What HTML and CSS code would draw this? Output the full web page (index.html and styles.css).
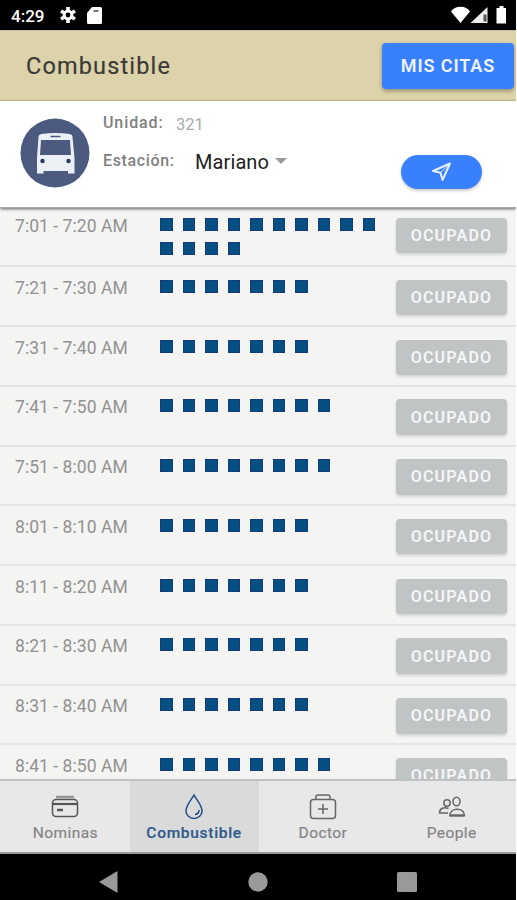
FILE: index.html
```html
<!DOCTYPE html>
<html lang="es">
<head>
<meta charset="utf-8">
<title>Combustible</title>
<link rel="stylesheet" href="styles.css">
</head>
<body>
<div class="phone">
  <div class="status">
    <span class="clock">4:29</span>
    <svg class="gear" width="16" height="16" viewBox="0 0 16 16"><g stroke="#fff" stroke-width="3.6"><path d="M8 0v16M1 4l14 8M1 12l14-8"/></g><circle cx="8" cy="8" r="5.4" fill="#fff"/><circle cx="8" cy="8" r="2.4" fill="#000"/></svg>
    <svg class="sd" width="15" height="17" viewBox="0 0 15 17"><path d="M5 0h8.500q1.500 0 1.500 1.500v14q0 1.500-1.500 1.500h-12q-1.500 0-1.500-1.500V6z" fill="#fff"/><path d="M6.500 4h5" stroke="#777" stroke-width="2"/></svg>
    <span class="fill"></span>
    <svg width="56" height="18" viewBox="0 0 56 18"><path d="M0 5.500Q3 .8 9.500.8T19 5.500L9.500 17z" fill="#fff"/><path d="M19.500 17L36.500 1v16z" fill="#eee"/><path d="M32.500 8.500h3v7h-3z" fill="#555"/><path d="M48.500 0h4v2h2.500v15.500h-9.500V2h3z" fill="#fff"/></svg>
  </div>
  <header class="bar">
    <h1>Combustible</h1>
    <button class="citas">MIS CITAS</button>
  </header>
  <section class="unit">
    <svg class="bus" width="70" height="70" viewBox="0 0 70 70"><circle cx="35" cy="35" r="34.500" fill="#4c5a80"/><path d="M18.500 19q0-2.500 3-3 14-2 28 0 3 .5 3 3L54.500 40v15.500h-6.500V53H23.500v2.500H17V40z" fill="#edf1f6"/><path d="M21 22h29l1 15H20z" fill="#4c5a80"/><path d="M30.500 18.500h10" stroke="#4c5a80" stroke-width="1.500"/><circle cx="22.500" cy="43" r="2.200" fill="#263765"/><circle cx="48.500" cy="43" r="2.200" fill="#263765"/></svg>
    <div class="fields">
      <div class="field"><span class="label unidad">Unidad:</span><span class="num">321</span></div>
      <div class="field station"><span class="label">Estación:</span><span class="select">Mariano</span><svg width="12" height="6" viewBox="0 0 12 6"><path d="M0 0h12L6 6z" fill="#999"/></svg></div>
    </div>
    <button class="send"><svg width="21" height="20" viewBox="0 0 21 20"><path d="M19 1.500L2 9l7.500 1.700L11.500 18z" fill="none" stroke="#e6efff" stroke-width="2" stroke-linejoin="round"/><path d="M19 1.500l-9.500 9.200" stroke="#e6efff" stroke-width="1"/></svg></button>
  </section>
  <main class="list">
    <div class="row first"><span class="time">7:01 - 7:20 AM</span><div class="slots"><i></i><i></i><i></i><i></i><i></i><i></i><i></i><i></i><i></i><i></i><i></i><i></i><i></i><i></i></div><button class="busy">OCUPADO</button></div>
    <div class="row"><span class="time">7:21 - 7:30 AM</span><div class="slots"><i></i><i></i><i></i><i></i><i></i><i></i><i></i></div><button class="busy">OCUPADO</button></div>
    <div class="row"><span class="time">7:31 - 7:40 AM</span><div class="slots"><i></i><i></i><i></i><i></i><i></i><i></i><i></i></div><button class="busy">OCUPADO</button></div>
    <div class="row"><span class="time">7:41 - 7:50 AM</span><div class="slots"><i></i><i></i><i></i><i></i><i></i><i></i><i></i><i></i></div><button class="busy">OCUPADO</button></div>
    <div class="row"><span class="time">7:51 - 8:00 AM</span><div class="slots"><i></i><i></i><i></i><i></i><i></i><i></i><i></i><i></i></div><button class="busy">OCUPADO</button></div>
    <div class="row"><span class="time">8:01 - 8:10 AM</span><div class="slots"><i></i><i></i><i></i><i></i><i></i><i></i><i></i></div><button class="busy">OCUPADO</button></div>
    <div class="row"><span class="time">8:11 - 8:20 AM</span><div class="slots"><i></i><i></i><i></i><i></i><i></i><i></i><i></i></div><button class="busy">OCUPADO</button></div>
    <div class="row"><span class="time">8:21 - 8:30 AM</span><div class="slots"><i></i><i></i><i></i><i></i><i></i><i></i><i></i></div><button class="busy">OCUPADO</button></div>
    <div class="row"><span class="time">8:31 - 8:40 AM</span><div class="slots"><i></i><i></i><i></i><i></i><i></i><i></i><i></i></div><button class="busy">OCUPADO</button></div>
    <div class="row"><span class="time">8:41 - 8:50 AM</span><div class="slots"><i></i><i></i><i></i><i></i><i></i><i></i><i></i><i></i></div><button class="busy">OCUPADO</button></div>
  </main>
  <nav class="tabs">
    <a class="tab"><svg width="28" height="28" viewBox="0 0 28 28" fill="none" stroke="#555" stroke-width="1.500"><path d="M5 4h18" stroke="#999" stroke-width="2.500"/><rect x="1.500" y="6.500" width="25" height="17" rx="3.500"/><path d="M2 11h24" stroke-width="2.200"/><path d="M6 17h6" stroke-width="2.500"/></svg><span>Nominas</span></a>
    <a class="tab active"><svg width="28" height="28" viewBox="0 0 28 28" fill="none" stroke="#1f4c8c" stroke-width="1.500"><path d="M14 2C12 6 6 12 6 18a8 7.500 0 0 0 16 0c0-6-6-12-8-16z"/><path d="M19 17q0 4-4 4.500"/></svg><span>Combustible</span></a>
    <a class="tab"><svg width="28" height="28" viewBox="0 0 28 28" fill="none" stroke="#666" stroke-width="1.500"><rect x="1.500" y="6.500" width="25" height="19" rx="3"/><path d="M7 6V4q0-2 2-2h10q2 0 2 2v2M14 11v10M9 16h10"/></svg><span>Doctor</span></a>
    <a class="tab"><svg width="28" height="28" viewBox="0 0 28 28" fill="none" stroke="#666" stroke-width="1.500"><ellipse cx="18.500" cy="8.500" rx="3.500" ry="4.300"/><path d="M12 22.500c0-8.500 14-8.500 14.500 0z"/><path d="M11.500 22.500h15" stroke-width="2.200"/><circle cx="9" cy="10" r="3.200"/><path d="M10 20H1.500c0-5 5-6 9-4.500"/></svg><span>People</span></a>
  </nav>
  <div class="system">
    <svg width="19" height="22" viewBox="0 0 19 22"><path d="M18.500 0v22L0 11z" fill="#999"/></svg>
    <svg width="20" height="20" viewBox="0 0 20 20"><circle cx="10" cy="10" r="9.700" fill="#999"/></svg>
    <svg width="20" height="20" viewBox="0 0 20 20"><rect width="20" height="20" rx="1.500" fill="#999"/></svg>
  </div>
</div>
</body>
</html>
```
FILE: styles.css
```css
* { box-sizing: border-box; }
body { margin: 0; background: #fff; font-family: Roboto, "Liberation Sans", sans-serif; }
button { border: 0; padding: 0; font-family: inherit; }
svg { display: block; flex: none; }
.phone { width: 516px; height: 900px; display: flex; flex-direction: column; overflow: hidden; background: #f4f4f2; }
.status { height: 30px; flex: none; background: #000; display: flex; align-items: center; padding: 0 9px 0 11px; color: #fff; }
.clock { width: 49px; font-size: 17px; font-weight: 500; letter-spacing: 0; padding-top: 2px; }
.sd { margin-left: 11px; }
.fill { flex: 1; }
.bar { height: 71px; flex: none; background: #ddd3aa; border-top: 1px solid #c5bd98; border-bottom: 1px solid #d5c999; display: flex; justify-content: space-between; align-items: center; padding: 0 2px 0 26px; }
h1 { margin: 0; font-size: 23.5px; font-weight: 400; letter-spacing: 1.15px; color: #3a3a38; -webkit-text-stroke: 0.2px #3a3a38; }
.citas { width: 132px; height: 46px; border-radius: 4px; background: #3880ff; color: #eef3ff; font-size: 18px; font-weight: 600; letter-spacing: 0.9px; box-shadow: 0 2px 4px #0005; }
.unit { height: 107px; flex: none; z-index: 1; background: #fff; box-shadow: 0 1px 3px #0009; display: flex; padding: 0 34px 0 20px; border-bottom: 1px solid #aaa; }
.bus { margin-top: 17px; }
.fields { flex: 1; padding: 11px 0 0 13px; }
.field { display: flex; align-items: center; height: 22px; }
.label { width: 92px; font-size: 16px; font-weight: 500; letter-spacing: 0.65px; color: #808080; padding-bottom: 2px; }
.unidad { width: 73px; letter-spacing: 0.9px; }
.num { font-size: 16.5px; color: #aaa; padding-top: 3px; }
.station { margin-top: 16px; }
.select { width: 80px; font-size: 20px; letter-spacing: 0.1px; color: #222; padding-top: 2px; }
.send { width: 81px; height: 34px; margin-top: 54px; border-radius: 17px; background: #3880ff; display: flex; align-items: center; justify-content: center; box-shadow: 0 2px 3px #0003; }
.list { flex: 1; min-height: 0; overflow: hidden; margin-top: -3px; }
.row { height: 59.75px; display: flex; align-items: flex-start; padding: 12.5px 9px 0 15px; border-bottom: 2px solid #e4e4e4; }
.first { height: 62.4px; }
.time { width: 145px; font-size: 17.5px; line-height: 17px; letter-spacing: 0.05px; color: #929292; white-space: nowrap; }
.slots { width: 236px; display: flex; flex-wrap: wrap; column-gap: 10px; row-gap: 11px; }
.slots i { width: 12.5px; height: 13px; background: #064f83; border: 1px solid #153c7a; }
.busy { width: 111px; height: 35.5px; flex: none; border-radius: 4px; background: #c1c4c5; color: #f5f6f6; font-size: 16px; font-weight: 600; letter-spacing: 1.2px; box-shadow: 0 2px 3px #0002; }
.tabs { height: 75px; flex: none; background: #e8e8e8; border-top: 2px solid #bfc2c4; border-bottom: 2px solid #999; display: flex; padding-left: 1px; }
.tab { flex: 1; display: flex; flex-direction: column; align-items: center; padding-top: 12px; color: #858585; font-size: 15.5px; line-height: 20px; letter-spacing: 0.4px; }
.tab span { margin-top: 2px; -webkit-text-stroke: 0.2px currentColor; }
.active { background: #dadada; color: #315a8c; font-weight: 500; letter-spacing: 0.7px; }
.system { height: 46px; flex: none; background: #000; display: flex; align-items: center; justify-content: space-between; padding: 10px 99px 0 99px; }
```
